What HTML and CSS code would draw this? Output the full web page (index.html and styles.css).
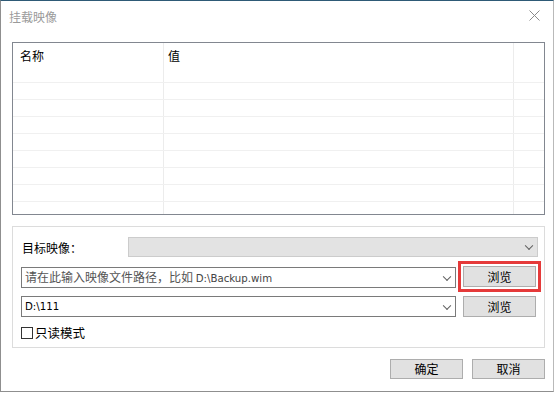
FILE: index.html
```html
<!DOCTYPE html>
<html>
<head>
<meta charset="utf-8">
<link rel="stylesheet" href="styles.css">
</head>
<body>
<div class="window">
  <div class="titlebar">
    <span class="title">挂载映像</span>
    <svg class="close" width="11" height="11" viewBox="0 0 11 11"><path d="M0.5 0.5 L10.5 10.5 M10.5 0.5 L0.5 10.5" stroke="#8a8a8a" stroke-width="1" fill="none"/></svg>
  </div>
  <div class="main">
    <div class="list">
      <div class="cols">
        <div class="col c1"></div>
        <div class="col c2"></div>
        <div class="col c3"></div>
      </div>
      <div class="header">
        <span class="h1">名称</span>
        <span class="h2">值</span>
      </div>
      <div class="rows">
        <div class="row"></div><div class="row"></div><div class="row"></div><div class="row"></div>
        <div class="row"></div><div class="row"></div><div class="row"></div><div class="row"></div>
      </div>
    </div>
    <div class="group">
      <div class="line l1">
        <span class="label">目标映像：</span>
        <div class="combo disabled"><span class="chev"></span></div>
      </div>
      <div class="line l2">
        <div class="combo edit"><span class="ph">请在此输入映像文件路径，比如 <span class="lat">D:\Backup.wim</span></span><span class="chev"></span></div>
        <button class="btn browse focus">浏览</button>
      </div>
      <div class="line l3">
        <div class="combo edit"><span class="val lat">D:\111</span><span class="chev"></span></div>
        <button class="btn browse">浏览</button>
      </div>
      <label class="check"><span class="box"></span><span>只读模式</span></label>
    </div>
    <div class="footer">
      <button class="btn foot">确定</button>
      <button class="btn foot">取消</button>
    </div>
  </div>
</div>
</body>
</html>
```
FILE: styles.css
```css
html, body {
  margin: 0;
  padding: 0;
  background: #ffffff;
}
body {
  font-family: "Noto Sans CJK SC", "Noto Sans", sans-serif;
  font-size: 12px;
  color: #000;
}
.window {
  box-sizing: border-box;
  width: 554px;
  height: 392px;
  border-top: 1px solid #2e5a76;
  border-left: 1px solid #8f8f8f;
  border-right: 1px solid #b9b9b9;
  border-bottom: 1px solid #8f8f8f;
  background: #fff;
  display: flex;
  flex-direction: column;
}
.titlebar {
  height: 30px;
  display: flex;
  align-items: center;
  justify-content: space-between;
  padding: 0 13px 0 8px;
}
.title {
  color: #9a9a9a;
  font-size: 12px;
  line-height: 14px;
  margin-top: 1px;
}
.close {
  display: block;
  margin-top: -1px;
}
.main {
  padding: 11px 8px 0 11px;
  display: flex;
  flex-direction: column;
}
.list {
  position: relative;
  box-sizing: border-box;
  height: 173px;
  border: 1px solid #828790;
  overflow: hidden;
}
.cols {
  position: absolute;
  inset: 0;
  display: flex;
}
.col { height: 100%; }
.c1 { width: 150px; border-right: 1px solid #ececec; }
.c2 { width: 349px; border-right: 1px solid #ececec; }
.c3 { flex: 1; }
.header {
  position: relative;
  height: 23px;
  display: flex;
  align-items: center;
}
.h1 { width: 151px; padding-left: 7px; box-sizing: border-box; line-height: 14px; margin-top: 2px; }
.h2 { padding-left: 4px; line-height: 14px; margin-top: 2px; }
.rows { position: relative; }
.row {
  height: 17px;
  border-bottom: 1px solid #f0f0f0;
  box-sizing: border-box;
}
.group {
  margin-top: 11px;
  box-sizing: border-box;
  height: 122px;
  border: 1px solid #dcdcdc;
  padding: 10px 6px 0 8px;
  display: flex;
  flex-direction: column;
}
.line {
  display: flex;
  align-items: center;
}
.l1 { height: 20px; }
.l2 { height: 21px; margin-top: 9px; gap: 7px; }
.l3 { height: 21px; margin-top: 9px; gap: 7px; }
.label {
  width: 107px;
  padding-left: 1px;
  box-sizing: border-box;
  line-height: 14px;
  margin-top: 2px;
}
.combo {
  position: relative;
  box-sizing: border-box;
  height: 100%;
  display: flex;
  align-items: center;
}
.disabled {
  flex: 1;
  background: #e3e3e3;
  border: 1px solid #cccccc;
}
.edit {
  width: 435px;
  border: 1px solid #7a7a7a;
  background: #fff;
  padding-left: 3px;
}
.l2 .edit { height: 21px; margin-top: 2px; }
.ph { color: #555; line-height: 14px; white-space: nowrap; }
.lat {
  font-family: "DejaVu Sans", "Liberation Sans", sans-serif;
  font-size: 10.2px;
  color: #444;
}
.val { color: #000; }
.chev {
  position: absolute;
  right: 5px;
  top: 50%;
  width: 5px;
  height: 5px;
  border-right: 1px solid #606060;
  border-bottom: 1px solid #606060;
  transform: translateY(-70%) rotate(45deg);
}
.btn {
  box-sizing: border-box;
  height: 21px;
  background: #e1e1e1;
  border: 1px solid #adadad;
  font-family: "Noto Sans CJK SC", "Noto Sans", sans-serif;
  font-size: 12px;
  line-height: 14px;
  padding: 0;
  color: #000;
}
.browse { width: 73px; }
.focus {
  outline: 3px solid #e53a3a;
  outline-offset: 2px;
}
.check {
  display: flex;
  align-items: center;
  margin-top: 9px;
  height: 13px;
  line-height: 14px;
  font-size: 12.5px;
}
.box {
  box-sizing: border-box;
  width: 12px;
  height: 12px;
  border: 1px solid #333;
  background: #fff;
  margin-right: 2px;
}
.footer {
  display: flex;
  justify-content: flex-end;
  gap: 9px;
  margin-top: 11px;
}
.foot { width: 73px; height: 20px; }
```
